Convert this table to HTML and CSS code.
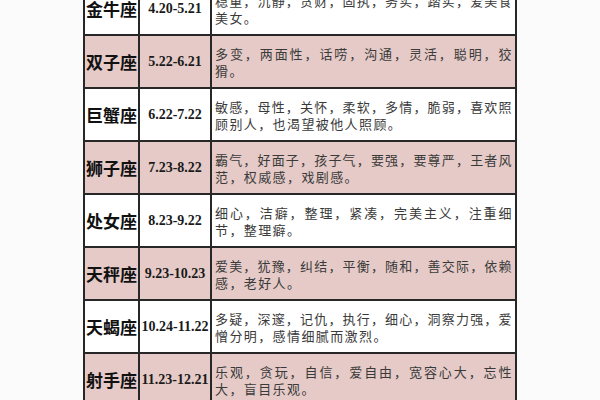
FILE: index.html
```html
<!DOCTYPE html>
<html lang="zh">
<head>
<meta charset="utf-8">
<title>星座性格</title>
<link rel="stylesheet" href="styles.css">
</head>
<body>
<div class="page">
<table class="zodiac">
  <colgroup>
    <col class="c-name">
    <col class="c-date">
    <col class="c-desc">
  </colgroup>
  <tr class="white">
    <td class="name">金牛座</td><td class="date">4.20-5.21</td>
    <td class="desc"><span class="l1">稳重，沉静，贪财，固执，务实，踏实，爱美食</span><span class="l2">美女。</span></td>
  </tr>
  <tr class="pink">
    <td class="name">双子座</td><td class="date">5.22-6.21</td>
    <td class="desc"><span class="l1">多变，两面性，话唠，沟通，灵活，聪明，狡</span><span class="l2">猾。</span></td>
  </tr>
  <tr class="white">
    <td class="name">巨蟹座</td><td class="date">6.22-7.22</td>
    <td class="desc"><span class="l1">敏感，母性，关怀，柔软，多情，脆弱，喜欢照</span><span class="l2">顾别人，也渴望被他人照顾。</span></td>
  </tr>
  <tr class="pink">
    <td class="name">狮子座</td><td class="date">7.23-8.22</td>
    <td class="desc"><span class="l1">霸气，好面子，孩子气，要强，要尊严，王者风</span><span class="l2">范，权威感，戏剧感。</span></td>
  </tr>
  <tr class="white">
    <td class="name">处女座</td><td class="date">8.23-9.22</td>
    <td class="desc"><span class="l1">细心，洁癖，整理，紧凑，完美主义，注重细</span><span class="l2">节，整理癖。</span></td>
  </tr>
  <tr class="pink">
    <td class="name">天秤座</td><td class="date">9.23-10.23</td>
    <td class="desc"><span class="l1">爱美，犹豫，纠结，平衡，随和，善交际，依赖</span><span class="l2">感，老好人。</span></td>
  </tr>
  <tr class="white">
    <td class="name">天蝎座</td><td class="date">10.24-11.22</td>
    <td class="desc"><span class="l1">多疑，深邃，记仇，执行，细心，洞察力强，爱</span><span class="l2">憎分明，感情细腻而激烈。</span></td>
  </tr>
  <tr class="pink">
    <td class="name">射手座</td><td class="date">11.23-12.21</td>
    <td class="desc"><span class="l1">乐观，贪玩，自信，爱自由，宽容心大，忘性</span><span class="l2">大，盲目乐观。</span></td>
  </tr>
</table>
</div>
</body>
</html>
```
FILE: styles.css
```css
html, body {
  margin: 0;
  padding: 0;
  background: #fbfbfb;
}
.page {
  width: 600px;
  height: 400px;
  overflow: hidden;
  padding-left: 83px;
  box-sizing: border-box;
}
.zodiac {
  margin-top: -19px;
  border-collapse: collapse;
  table-layout: fixed;
  width: 432px;
  background: #ffffff;
}
.c-name { width: 55px; }
.c-date { width: 72px; }
.c-desc { width: 305px; }
.zodiac td {
  border: 2px solid #272727;
  height: 51px;
  padding: 0;
  vertical-align: middle;
  overflow: hidden;
}
.zodiac tr.pink td { background: #e5cac7; }
.zodiac tr.white td { background: #ffffff; }
.name {
  font-family: "Noto Sans CJK SC", "Noto Sans", sans-serif;
  font-weight: 700;
  font-size: 17px;
  color: #111111;
  text-align: center;
  white-space: nowrap;
}
.date {
  font-family: "Liberation Serif", "DejaVu Serif", serif;
  font-weight: 700;
  font-size: 14px;
  color: #1a1a1a;
  text-align: center;
  white-space: nowrap;
}
.zodiac td.desc {
  font-family: "Noto Sans CJK SC", "Noto Sans", sans-serif;
  font-size: 13px;
  line-height: 17px;
  color: #3a3a3a;
  padding: 0 3px 0 3px;
}
.l1 {
  display: block;
  text-align: justify;
  text-align-last: justify;
  text-justify: inter-character;
  letter-spacing: 0.5px;
}
.l2 {
  display: block;
  text-align: left;
  letter-spacing: 1.4px;
}
```
